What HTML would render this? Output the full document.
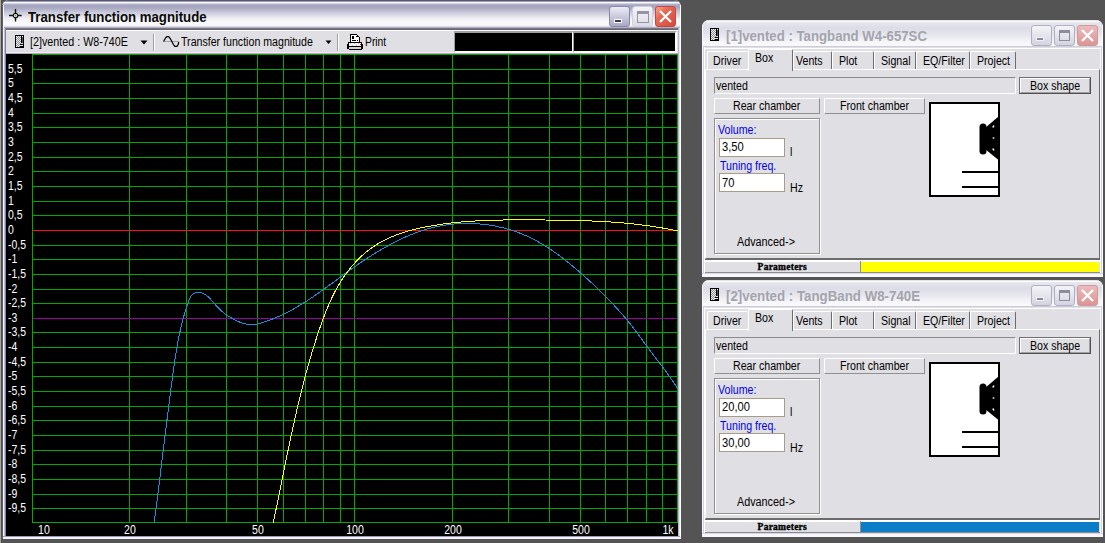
<!DOCTYPE html><html><head><meta charset="utf-8"><style>
*{margin:0;padding:0;box-sizing:border-box}
html,body{width:1105px;height:543px;overflow:hidden;background:#545454;font-family:"Liberation Sans", sans-serif}
.a{position:absolute}
.t{position:absolute;white-space:pre;line-height:1;color:#000}
</style></head><body>
<div class="a" style="left:2px;top:0;width:679px;height:539px;background:#e0dfe3;border-radius:7px 7px 0 0;overflow:hidden">
<div class="a" style="left:0;top:0;width:679px;height:31px;background:linear-gradient(to bottom,#565872 0px,#565872 1px,#9a9ab0 1px,#9a9ab0 2px,#fbfbfd 2px,#fbfbfd 3px,#d4d4e2 3px,#d4d4e2 4px,#b0b0c8 4px,#b0b0c8 5px,#a8a8c2 5px,#a8a8c2 6px,#a4a4bf 6px,#a4a4bf 7px,#a8a8c2 7px,#a8a8c2 8px,#acacc6 8px,#acacc6 9px,#b4b4cb 9px,#b4b4cb 10px,#bcbcd0 10px,#bcbcd0 11px,#c4c4d6 11px,#c4c4d6 12px,#cacada 12px,#cacada 13px,#d0d0de 13px,#d0d0de 14px,#d6d6e2 14px,#d6d6e2 15px,#dcdce6 15px,#dcdce6 16px,#e2e2eb 16px,#e2e2eb 17px,#e8e8ef 17px,#e8e8ef 18px,#eeeef3 18px,#eeeef3 19px,#f2f2f6 19px,#f2f2f6 20px,#f5f5f8 20px,#f5f5f8 21px,#f8f8fa 21px,#f8f8fa 22px,#f8f8fb 22px,#f8f8fb 23px,#f8f8fb 23px,#f8f8fb 24px,#f8f8fb 24px,#f8f8fb 25px,#f4f4f8 25px,#f4f4f8 26px,#dcdce4 26px,#dcdce4 27px,#b0b0c0 27px,#b0b0c0 28px,#787888 28px,#787888 29px,#646474 29px,#646474 30px,#ffffff 30px,#ffffff 31px)"></div>
</div>
<div class="a" style="left:0;top:0;width:1px;height:543px;background:#a6a8a0"></div>
<div class="a" style="left:1px;top:0;width:1px;height:543px;background:#4e4e4a"></div>
<div class="a" style="left:2px;top:5px;width:1px;height:534px;background:#5e5e6e"></div>
<div class="a" style="left:3px;top:5px;width:1px;height:534px;background:#f4f6ff"></div>
<div class="a" style="left:4px;top:28px;width:1px;height:510px;background:#c0c0d8"></div>
<div class="a" style="left:5px;top:28px;width:1px;height:509px;background:#8080a8"></div>
<div class="a" style="left:678px;top:28px;width:1px;height:510px;background:#b8b8d4"></div>
<div class="a" style="left:679px;top:28px;width:1px;height:510px;background:#e4e4f0"></div>
<div class="a" style="left:680px;top:5px;width:1px;height:534px;background:#ffffff"></div>
<div class="a" style="left:3px;top:536px;width:677px;height:1px;background:#9898c0"></div>
<div class="a" style="left:3px;top:537px;width:678px;height:2px;background:#f4f4fc"></div>
<svg class="a" style="left:8px;top:8px" width="16" height="16" viewBox="0 0 16 16">
<path d="M7.5 1V13.6M1 7.5H13.6" stroke="#101010" stroke-width="1.4"/>
<circle cx="7.5" cy="7.5" r="2.2" fill="none" stroke="#101010" stroke-width="1.3"/>
<circle cx="7.5" cy="7.5" r="1.6" fill="#f0f0f0"/><circle cx="7.5" cy="7.5" r="0.7" fill="#70a020"/></svg>
<div class="t" style="left:28.30px;top:10.15px;font-size:14px;font-weight:bold;color:#0a0a0a;transform:scaleX(0.945);transform-origin:0 0;">Transfer function magnitude</div>
<div class="a" style="left:609px;top:6px;width:21px;height:21px;border-radius:3px;border:1px solid #8888a8;background:linear-gradient(to bottom,#ececf6 0%,#cacade 50%,#a8a8c8 100%)"></div>
<svg class="a" style="left:609px;top:6px" width="21" height="21"><rect x="5.5" y="13.5" width="7" height="3" fill="#383858" stroke="#fff" stroke-width="1"/></svg>
<div class="a" style="left:632px;top:6px;width:21px;height:21px;border-radius:3px;border:1px solid #d0d0dc;background:linear-gradient(to bottom,#f4f4f8,#dcdce6)"></div>
<svg class="a" style="left:632px;top:6px" width="21" height="21"><rect x="5.5" y="5.5" width="11" height="11" fill="none" stroke="#9494a4" stroke-width="1"/><rect x="5.5" y="5.5" width="11" height="2.5" fill="#9494a4"/></svg>
<div class="a" style="left:655px;top:6px;width:21px;height:21px;border-radius:3px;border:1px solid #c04848;background:linear-gradient(135deg,#f4a890 0%,#e46a52 35%,#d8483c 100%)"></div>
<svg class="a" style="left:655px;top:6px" width="21" height="21"><path d="M5 5L16 16M16 5L5 16" stroke="#fff" stroke-width="2.3"/></svg>
<div class="a" style="left:6px;top:31px;width:672px;height:20px;background:#e0dfe3"></div>
<div class="a" style="left:6px;top:51px;width:672px;height:1px;background:#dcdce8"></div>
<div class="a" style="left:6px;top:52px;width:672px;height:1px;background:#f0f0f6"></div>
<div class="a" style="left:6px;top:53px;width:672px;height:1px;background:#b8aab4"></div>
<svg class="a" style="left:15px;top:35px" width="9" height="13" viewBox="0 0 9 13" shape-rendering="crispEdges"><rect x="0" y="0" width="9" height="13" fill="#000"/><rect x="1" y="1" width="1" height="1" fill="#f0f0f0"/><rect x="2" y="1" width="1" height="1" fill="#8c8c8c"/><rect x="3" y="1" width="1" height="1" fill="#f0f0f0"/><rect x="4" y="1" width="1" height="1" fill="#8c8c8c"/><rect x="5" y="1" width="1" height="1" fill="#f0f0f0"/><rect x="1" y="2" width="1" height="1" fill="#8c8c8c"/><rect x="2" y="2" width="1" height="1" fill="#f0f0f0"/><rect x="3" y="2" width="1" height="1" fill="#8c8c8c"/><rect x="4" y="2" width="1" height="1" fill="#f0f0f0"/><rect x="5" y="2" width="1" height="1" fill="#8c8c8c"/><rect x="1" y="3" width="1" height="1" fill="#f0f0f0"/><rect x="2" y="3" width="1" height="1" fill="#8c8c8c"/><rect x="3" y="3" width="1" height="1" fill="#f0f0f0"/><rect x="4" y="3" width="1" height="1" fill="#8c8c8c"/><rect x="5" y="3" width="1" height="1" fill="#f0f0f0"/><rect x="1" y="4" width="1" height="1" fill="#8c8c8c"/><rect x="2" y="4" width="1" height="1" fill="#f0f0f0"/><rect x="3" y="4" width="1" height="1" fill="#8c8c8c"/><rect x="4" y="4" width="1" height="1" fill="#f0f0f0"/><rect x="5" y="4" width="1" height="1" fill="#8c8c8c"/><rect x="1" y="5" width="1" height="1" fill="#f0f0f0"/><rect x="2" y="5" width="1" height="1" fill="#8c8c8c"/><rect x="3" y="5" width="1" height="1" fill="#f0f0f0"/><rect x="4" y="5" width="1" height="1" fill="#8c8c8c"/><rect x="5" y="5" width="1" height="1" fill="#f0f0f0"/><rect x="1" y="6" width="1" height="1" fill="#8c8c8c"/><rect x="2" y="6" width="1" height="1" fill="#f0f0f0"/><rect x="3" y="6" width="1" height="1" fill="#8c8c8c"/><rect x="4" y="6" width="1" height="1" fill="#f0f0f0"/><rect x="5" y="6" width="1" height="1" fill="#8c8c8c"/><rect x="1" y="7" width="1" height="1" fill="#f0f0f0"/><rect x="2" y="7" width="1" height="1" fill="#8c8c8c"/><rect x="3" y="7" width="1" height="1" fill="#f0f0f0"/><rect x="4" y="7" width="1" height="1" fill="#8c8c8c"/><rect x="5" y="7" width="1" height="1" fill="#f0f0f0"/><rect x="1" y="8" width="1" height="1" fill="#8c8c8c"/><rect x="2" y="8" width="1" height="1" fill="#f0f0f0"/><rect x="3" y="8" width="1" height="1" fill="#8c8c8c"/><rect x="4" y="8" width="1" height="1" fill="#f0f0f0"/><rect x="5" y="8" width="1" height="1" fill="#8c8c8c"/><rect x="1" y="9" width="1" height="1" fill="#f0f0f0"/><rect x="2" y="9" width="1" height="1" fill="#8c8c8c"/><rect x="3" y="9" width="1" height="1" fill="#f0f0f0"/><rect x="4" y="9" width="1" height="1" fill="#8c8c8c"/><rect x="1" y="10" width="1" height="1" fill="#8c8c8c"/><rect x="2" y="10" width="1" height="1" fill="#f0f0f0"/><rect x="3" y="10" width="1" height="1" fill="#8c8c8c"/><rect x="4" y="10" width="1" height="1" fill="#f0f0f0"/><rect x="1" y="11" width="1" height="1" fill="#f0f0f0"/><rect x="2" y="11" width="1" height="1" fill="#8c8c8c"/><rect x="3" y="11" width="1" height="1" fill="#f0f0f0"/><rect x="4" y="11" width="1" height="1" fill="#8c8c8c"/><rect x="7" y="1" width="1" height="1" fill="#f0f0f0"/><rect x="7" y="2" width="1" height="6" fill="#505050"/><rect x="6" y="8" width="2" height="1" fill="#e8e8e8"/><rect x="5" y="10" width="3" height="1" fill="#e8e8e8"/></svg>
<div class="t" style="left:30.30px;top:35.84px;font-size:12px;color:#000;transform:scaleX(0.895);transform-origin:0 0;">[2]vented : W8-740E</div>
<svg class="a" style="left:140px;top:40px" width="8" height="5"><path d="M0.5 0.5H7.5L4 4.5Z" fill="#000"/></svg>
<div class="a" style="left:153px;top:34px;width:1px;height:17px;background:#a0a0a4"></div>
<div class="a" style="left:154px;top:34px;width:1px;height:17px;background:#ffffff"></div>
<svg class="a" style="left:158px;top:32px" width="26" height="18"><path d="M6,9.5H21" stroke="#a0a0a8" stroke-width="1"/><path d="M5.5,9.5 L7.5,6.0 L8.8,4.5 L10.7,4.5 L12.2,6.5 L13.6,9.0 L15.4,12.5 L16.8,14.4 L19.0,14.4 L20.3,12.2 L20.7,10.0" fill="none" stroke="#000" stroke-width="1.25"/></svg>
<div class="t" style="left:181.40px;top:35.84px;font-size:12px;color:#000;transform:scaleX(0.885);transform-origin:0 0;">Transfer function magnitude</div>
<svg class="a" style="left:325px;top:40px" width="8" height="5"><path d="M0.5 0.5H6.5L3.5 4Z" fill="#000"/></svg>
<div class="a" style="left:337px;top:34px;width:1px;height:17px;background:#a0a0a4"></div>
<div class="a" style="left:338px;top:34px;width:1px;height:17px;background:#ffffff"></div>
<svg class="a" style="left:344px;top:31px" width="22" height="21" viewBox="0 0 22 21" shape-rendering="crispEdges">
<path d="M6.5 11.5V3.5H12.5L15.5 6.5V11.5" fill="#fff" stroke="#000"/>
<rect x="8" y="5" width="2" height="2" fill="#000"/><rect x="8" y="7" width="2" height="1" fill="#000"/>
<rect x="8" y="9" width="4" height="1" fill="#000"/><rect x="13" y="9" width="1" height="1" fill="#000"/><rect x="12" y="5" width="2" height="1" fill="#000"/>
<path d="M4.5 11.5H17.5V17.5H4.5Z" fill="#fff" stroke="#000"/>
<path d="M3.5 12.5V17.5M18.5 12.5V17.5M4.5 18.5H17.5" stroke="#000"/>
<rect x="5" y="12" width="12" height="3" fill="#f4f4f4"/>
<rect x="6" y="12" width="1" height="1" fill="#bbb"/><rect x="8" y="14" width="1" height="1" fill="#bbb"/><rect x="10" y="12" width="1" height="1" fill="#bbb"/><rect x="12" y="14" width="1" height="1" fill="#bbb"/><rect x="14" y="12" width="1" height="1" fill="#bbb"/>
<rect x="16" y="13" width="1" height="1" fill="#e01030"/>
<rect x="4" y="15" width="14" height="1" fill="#000"/>
<rect x="5" y="16" width="12" height="2" fill="#d4d4d4"/>
</svg>
<div class="t" style="left:364.90px;top:35.84px;font-size:12px;color:#000;transform:scaleX(0.86);transform-origin:0 0;">Print</div>
<div class="a" style="left:454px;top:31px;width:119px;height:22px;border-top:2px solid #a0a0a0;border-left:1px solid #a0a0a0;border-right:1px solid #fff;border-bottom:2px solid #fff;background:#000"></div>
<div class="a" style="left:573px;top:31px;width:104px;height:22px;border-top:2px solid #a0a0a0;border-left:1px solid #a0a0a0;border-right:2px solid #fff;border-bottom:2px solid #fff;background:#000"></div>
<svg class="a" style="left:0;top:0" width="1105" height="543" shape-rendering="crispEdges">
<rect x="6" y="54" width="672" height="482" fill="#000"/>
<rect x="32" y="54" width="646" height="1" fill="#00a800"/>
<rect x="32" y="69" width="646" height="1" fill="#00a800"/>
<rect x="32" y="83" width="646" height="1" fill="#00a800"/>
<rect x="32" y="98" width="646" height="1" fill="#00a800"/>
<rect x="32" y="113" width="646" height="1" fill="#00a800"/>
<rect x="32" y="127" width="646" height="1" fill="#00a800"/>
<rect x="32" y="142" width="646" height="1" fill="#00a800"/>
<rect x="32" y="157" width="646" height="1" fill="#00a800"/>
<rect x="32" y="171" width="646" height="1" fill="#00a800"/>
<rect x="32" y="186" width="646" height="1" fill="#00a800"/>
<rect x="32" y="201" width="646" height="1" fill="#00a800"/>
<rect x="32" y="215" width="646" height="1" fill="#00a800"/>
<rect x="32" y="230" width="646" height="1" fill="#00a800"/>
<rect x="32" y="245" width="646" height="1" fill="#00a800"/>
<rect x="32" y="259" width="646" height="1" fill="#00a800"/>
<rect x="32" y="274" width="646" height="1" fill="#00a800"/>
<rect x="32" y="289" width="646" height="1" fill="#00a800"/>
<rect x="32" y="303" width="646" height="1" fill="#00a800"/>
<rect x="32" y="318" width="646" height="1" fill="#00a800"/>
<rect x="32" y="332" width="646" height="1" fill="#00a800"/>
<rect x="32" y="347" width="646" height="1" fill="#00a800"/>
<rect x="32" y="362" width="646" height="1" fill="#00a800"/>
<rect x="32" y="376" width="646" height="1" fill="#00a800"/>
<rect x="32" y="391" width="646" height="1" fill="#00a800"/>
<rect x="32" y="406" width="646" height="1" fill="#00a800"/>
<rect x="32" y="420" width="646" height="1" fill="#00a800"/>
<rect x="32" y="435" width="646" height="1" fill="#00a800"/>
<rect x="32" y="450" width="646" height="1" fill="#00a800"/>
<rect x="32" y="464" width="646" height="1" fill="#00a800"/>
<rect x="32" y="479" width="646" height="1" fill="#00a800"/>
<rect x="32" y="494" width="646" height="1" fill="#00a800"/>
<rect x="32" y="508" width="646" height="1" fill="#00a800"/>
<rect x="32" y="522" width="646" height="1" fill="#00a800"/>
<rect x="32" y="54" width="1" height="469" fill="#00a800"/>
<rect x="129" y="54" width="1" height="469" fill="#00a800"/>
<rect x="186" y="54" width="1" height="469" fill="#00a800"/>
<rect x="226" y="54" width="1" height="469" fill="#00a800"/>
<rect x="257" y="54" width="1" height="469" fill="#00a800"/>
<rect x="283" y="54" width="1" height="469" fill="#00a800"/>
<rect x="305" y="54" width="1" height="469" fill="#00a800"/>
<rect x="323" y="54" width="1" height="469" fill="#00a800"/>
<rect x="340" y="54" width="1" height="469" fill="#00a800"/>
<rect x="354" y="54" width="1" height="469" fill="#00a800"/>
<rect x="452" y="54" width="1" height="469" fill="#00a800"/>
<rect x="508" y="54" width="1" height="469" fill="#00a800"/>
<rect x="549" y="54" width="1" height="469" fill="#00a800"/>
<rect x="580" y="54" width="1" height="469" fill="#00a800"/>
<rect x="605" y="54" width="1" height="469" fill="#00a800"/>
<rect x="627" y="54" width="1" height="469" fill="#00a800"/>
<rect x="646" y="54" width="1" height="469" fill="#00a800"/>
<rect x="662" y="54" width="1" height="469" fill="#00a800"/>
<rect x="677" y="54" width="1" height="469" fill="#00a800"/>
<rect x="33" y="230" width="644" height="1" fill="#ff1010"/>
<rect x="33" y="318" width="644" height="1" fill="#a000a8"/>
</svg>
<svg class="a" style="left:0;top:0" width="1105" height="543"><defs><clipPath id="cp"><rect x="32" y="54" width="646" height="469"/></clipPath></defs><g clip-path="url(#cp)" fill="none" stroke-width="1" shape-rendering="crispEdges">
<path d="M154.15,522.99 L154.37,521.36 L154.58,519.72 L154.79,518.09 L155.00,516.45 L155.21,514.81 L155.42,513.18 L155.63,511.54 L155.84,509.90 L156.05,508.26 L156.26,506.63 L156.46,504.99 L156.67,503.35 L156.88,501.71 L157.08,500.07 L157.29,498.43 L157.50,496.79 L157.70,495.15 L157.91,493.51 L158.11,491.87 L158.31,490.23 L158.52,488.59 L158.72,486.95 L158.92,485.31 L159.13,483.67 L159.33,482.02 L159.53,480.38 L159.73,478.74 L159.94,477.10 L160.14,475.45 L160.34,473.81 L160.54,472.17 L160.74,470.53 L160.95,468.88 L161.15,467.24 L161.35,465.60 L161.55,463.95 L161.75,462.31 L161.95,460.67 L162.15,459.02 L162.35,457.38 L162.55,455.74 L162.76,454.09 L162.96,452.45 L163.16,450.81 L163.36,449.16 L163.56,447.52 L163.76,445.88 L163.96,444.23 L164.17,442.59 L164.37,440.94 L164.57,439.30 L164.77,437.66 L164.97,436.01 L165.18,434.37 L165.38,432.73 L165.58,431.08 L165.79,429.44 L165.99,427.80 L166.19,426.16 L166.40,424.51 L166.60,422.87 L166.81,421.23 L167.01,419.59 L167.22,417.94 L167.43,416.30 L167.63,414.66 L167.84,413.02 L168.05,411.38 L168.25,409.74 L168.46,408.09 L168.67,406.45 L168.88,404.81 L169.09,403.17 L169.30,401.53 L169.51,399.89 L169.72,398.25 L169.93,396.61 L170.15,394.97 L170.36,393.34 L170.57,391.70 L170.79,390.06 L171.00,388.42 L171.22,386.78 L171.43,385.15 L171.65,383.51 L171.87,381.87 L172.09,380.24 L172.31,378.60 L172.53,376.96 L172.75,375.33 L172.97,373.69 L173.19,372.06 L173.42,370.43 L173.64,368.79 L173.87,367.16 L174.10,365.53 L174.34,363.90 L174.57,362.26 L174.81,360.63 L175.06,359.00 L175.30,357.37 L175.56,355.74 L175.81,354.11 L176.07,352.48 L176.34,350.86 L176.61,349.23 L176.89,347.60 L177.17,345.98 L177.46,344.35 L177.76,342.72 L178.06,341.10 L178.37,339.48 L178.69,337.85 L179.01,336.23 L179.35,334.61 L179.69,332.99 L180.04,331.37 L180.40,329.75 L180.77,328.13 L181.15,326.51 L181.54,324.89 L181.93,323.27 L182.34,321.66 L182.76,320.04 L183.19,318.43 L183.63,316.81 L184.09,315.20 L184.55,313.59 L185.03,311.97 L185.52,310.36 L186.02,308.75 L186.54,307.14 L187.07,305.54 L187.61,303.93 L188.17,302.32 L188.76,300.74 L189.39,299.21 L190.10,297.77 L190.90,296.43 L191.81,295.25 L192.86,294.24 L194.06,293.43 L195.43,292.86 L196.96,292.54 L198.57,292.45 L200.21,292.60 L201.82,292.98 L203.37,293.57 L204.84,294.35 L206.25,295.29 L207.60,296.36 L208.90,297.54 L210.15,298.79 L211.36,300.08 L212.53,301.40 L213.67,302.71 L214.79,303.99 L215.89,305.23 L216.98,306.44 L218.09,307.62 L219.21,308.77 L220.37,309.88 L221.56,310.96 L222.79,312.01 L224.04,313.03 L225.34,314.02 L226.66,314.98 L228.01,315.90 L229.40,316.79 L230.81,317.66 L232.25,318.49 L233.72,319.30 L235.21,320.07 L236.72,320.80 L238.26,321.49 L239.81,322.12 L241.39,322.70 L242.97,323.21 L244.58,323.64 L246.19,324.01 L247.81,324.28 L249.44,324.47 L251.08,324.55 L252.72,324.54 L254.36,324.41 L256.00,324.19 L257.64,323.88 L259.27,323.50 L260.90,323.07 L262.52,322.58 L264.13,322.07 L265.74,321.53 L267.33,320.98 L268.90,320.41 L270.47,319.83 L272.03,319.23 L273.58,318.61 L275.11,317.98 L276.64,317.33 L278.16,316.67 L279.67,316.00 L281.17,315.31 L282.66,314.61 L284.14,313.89 L285.61,313.16 L287.08,312.42 L288.53,311.67 L289.98,310.90 L291.43,310.12 L292.86,309.33 L294.29,308.53 L295.71,307.72 L297.12,306.90 L298.53,306.07 L299.93,305.23 L301.33,304.38 L302.72,303.52 L304.11,302.65 L305.49,301.78 L306.86,300.89 L308.24,300.00 L309.60,299.10 L310.97,298.19 L312.33,297.28 L313.68,296.36 L315.03,295.43 L316.38,294.50 L317.73,293.56 L319.07,292.62 L320.41,291.67 L321.75,290.72 L323.09,289.77 L324.42,288.81 L325.76,287.84 L327.09,286.87 L328.42,285.90 L329.75,284.93 L331.08,283.96 L332.41,282.98 L333.74,282.00 L335.07,281.02 L336.40,280.04 L337.74,279.06 L339.07,278.08 L340.40,277.09 L341.74,276.11 L343.07,275.13 L344.41,274.15 L345.75,273.17 L347.10,272.20 L348.44,271.22 L349.79,270.25 L351.14,269.28 L352.50,268.31 L353.86,267.35 L355.22,266.39 L356.58,265.43 L357.96,264.48 L359.33,263.53 L360.71,262.58 L362.09,261.64 L363.48,260.71 L364.87,259.78 L366.26,258.86 L367.66,257.94 L369.06,257.03 L370.47,256.13 L371.88,255.23 L373.29,254.34 L374.71,253.46 L376.13,252.58 L377.56,251.71 L378.99,250.85 L380.43,250.00 L381.87,249.16 L383.31,248.33 L384.76,247.50 L386.21,246.69 L387.67,245.88 L389.13,245.08 L390.59,244.30 L392.06,243.52 L393.53,242.75 L395.01,242.00 L396.49,241.26 L397.97,240.53 L399.46,239.80 L400.96,239.10 L402.46,238.40 L403.96,237.72 L405.47,237.05 L406.98,236.39 L408.49,235.74 L410.01,235.11 L411.54,234.49 L413.06,233.89 L414.60,233.30 L416.13,232.73 L417.68,232.17 L419.22,231.62 L420.77,231.09 L422.33,230.58 L423.89,230.08 L425.45,229.60 L427.02,229.13 L428.59,228.69 L430.17,228.25 L431.75,227.84 L433.34,227.44 L434.93,227.06 L436.52,226.70 L438.12,226.36 L439.73,226.03 L441.34,225.72 L442.95,225.44 L444.57,225.17 L446.19,224.92 L447.82,224.69 L449.45,224.48 L451.08,224.29 L452.72,224.11 L454.36,223.96 L456.00,223.83 L457.64,223.71 L459.29,223.61 L460.94,223.53 L462.59,223.48 L464.24,223.44 L465.90,223.41 L467.55,223.41 L469.21,223.43 L470.86,223.46 L472.52,223.51 L474.18,223.59 L475.83,223.68 L477.49,223.79 L479.14,223.91 L480.80,224.06 L482.45,224.23 L484.10,224.41 L485.75,224.61 L487.39,224.83 L489.04,225.07 L490.68,225.32 L492.32,225.60 L493.95,225.89 L495.59,226.20 L497.22,226.53 L498.84,226.88 L500.46,227.25 L502.08,227.63 L503.69,228.03 L505.30,228.45 L506.90,228.89 L508.50,229.35 L510.09,229.82 L511.67,230.31 L513.25,230.82 L514.82,231.35 L516.39,231.89 L517.95,232.46 L519.50,233.04 L521.04,233.64 L522.58,234.25 L524.11,234.89 L525.63,235.54 L527.14,236.21 L528.65,236.89 L530.14,237.60 L531.63,238.32 L533.10,239.06 L534.57,239.81 L536.03,240.59 L537.48,241.37 L538.92,242.18 L540.35,243.00 L541.77,243.83 L543.18,244.68 L544.59,245.54 L545.99,246.42 L547.38,247.31 L548.76,248.21 L550.14,249.13 L551.51,250.05 L552.87,250.99 L554.22,251.94 L555.57,252.90 L556.91,253.87 L558.25,254.85 L559.58,255.83 L560.90,256.83 L562.22,257.83 L563.53,258.85 L564.83,259.87 L566.13,260.90 L567.43,261.93 L568.72,262.97 L570.00,264.02 L571.28,265.07 L572.56,266.12 L573.83,267.18 L575.10,268.25 L576.36,269.32 L577.62,270.39 L578.87,271.47 L580.12,272.55 L581.37,273.63 L582.61,274.73 L583.85,275.82 L585.08,276.92 L586.31,278.02 L587.53,279.13 L588.75,280.24 L589.97,281.36 L591.18,282.48 L592.39,283.60 L593.59,284.73 L594.79,285.87 L595.99,287.01 L597.18,288.15 L598.36,289.30 L599.54,290.45 L600.72,291.60 L601.90,292.76 L603.06,293.93 L604.23,295.10 L605.39,296.27 L606.54,297.45 L607.70,298.64 L608.84,299.82 L609.99,301.02 L611.13,302.21 L612.26,303.41 L613.39,304.62 L614.52,305.83 L615.64,307.05 L616.76,308.27 L617.87,309.49 L618.97,310.72 L620.08,311.95 L621.17,313.19 L622.26,314.44 L623.34,315.69 L624.42,316.95 L625.49,318.21 L626.56,319.47 L627.61,320.74 L628.66,322.02 L629.71,323.30 L630.74,324.59 L631.77,325.89 L632.79,327.19 L633.80,328.50 L634.80,329.81 L635.80,331.13 L636.78,332.45 L637.77,333.78 L638.74,335.11 L639.72,336.45 L640.68,337.78 L641.65,339.12 L642.62,340.46 L643.59,341.80 L644.56,343.13 L645.53,344.47 L646.51,345.80 L647.49,347.13 L648.47,348.46 L649.46,349.78 L650.46,351.10 L651.45,352.42 L652.45,353.74 L653.46,355.05 L654.46,356.37 L655.46,357.68 L656.47,359.00 L657.47,360.31 L658.47,361.63 L659.47,362.94 L660.48,364.26 L661.47,365.58 L662.47,366.90 L663.46,368.22 L664.45,369.55 L665.43,370.88 L666.41,372.21 L667.38,373.55 L668.35,374.89 L669.31,376.24 L670.26,377.59 L671.21,378.95 L672.15,380.31 L673.08,381.68 L673.99,383.06 L674.90,384.44 L675.80,385.83 L676.69,387.23 L677.57,388.63 L678.43,390.05" stroke="#1890e0"/>
<path d="M273.19,523.08 L273.44,521.88 L273.70,520.67 L273.95,519.46 L274.20,518.26 L274.45,517.05 L274.70,515.85 L274.96,514.64 L275.20,513.44 L275.45,512.23 L275.70,511.03 L275.95,509.82 L276.20,508.62 L276.45,507.42 L276.69,506.21 L276.94,505.01 L277.18,503.80 L277.43,502.60 L277.68,501.40 L277.92,500.19 L278.17,498.99 L278.41,497.79 L278.65,496.59 L278.90,495.38 L279.14,494.18 L279.38,492.98 L279.63,491.78 L279.87,490.58 L280.11,489.37 L280.36,488.17 L280.60,486.97 L280.84,485.77 L281.08,484.57 L281.33,483.37 L281.57,482.17 L281.81,480.97 L282.05,479.77 L282.29,478.57 L282.54,477.37 L282.78,476.17 L283.02,474.97 L283.26,473.77 L283.51,472.57 L283.75,471.37 L283.99,470.18 L284.23,468.98 L284.48,467.78 L284.72,466.58 L284.96,465.38 L285.21,464.19 L285.45,462.99 L285.70,461.79 L285.94,460.59 L286.19,459.40 L286.43,458.20 L286.68,457.01 L286.92,455.81 L287.17,454.61 L287.42,453.42 L287.66,452.22 L287.91,451.03 L288.16,449.83 L288.41,448.64 L288.66,447.44 L288.91,446.25 L289.16,445.05 L289.41,443.86 L289.66,442.67 L289.91,441.47 L290.16,440.28 L290.42,439.09 L290.67,437.89 L290.93,436.70 L291.18,435.51 L291.44,434.32 L291.69,433.13 L291.95,431.93 L292.21,430.74 L292.47,429.55 L292.73,428.36 L292.99,427.17 L293.25,425.98 L293.51,424.79 L293.78,423.60 L294.04,422.41 L294.30,421.22 L294.57,420.03 L294.84,418.84 L295.11,417.65 L295.37,416.46 L295.64,415.28 L295.92,414.09 L296.19,412.90 L296.46,411.71 L296.74,410.53 L297.01,409.34 L297.29,408.15 L297.56,406.97 L297.84,405.78 L298.12,404.59 L298.40,403.41 L298.69,402.22 L298.97,401.04 L299.26,399.85 L299.54,398.67 L299.83,397.48 L300.12,396.30 L300.41,395.11 L300.70,393.93 L300.99,392.75 L301.29,391.56 L301.58,390.38 L301.88,389.20 L302.18,388.02 L302.48,386.84 L302.78,385.65 L303.08,384.47 L303.39,383.29 L303.70,382.11 L304.00,380.93 L304.31,379.75 L304.62,378.57 L304.94,377.39 L305.25,376.21 L305.57,375.03 L305.88,373.85 L306.20,372.67 L306.52,371.50 L306.85,370.32 L307.17,369.14 L307.50,367.96 L307.83,366.79 L308.16,365.61 L308.49,364.43 L308.82,363.26 L309.16,362.08 L309.50,360.90 L309.83,359.73 L310.18,358.55 L310.52,357.38 L310.86,356.20 L311.21,355.03 L311.56,353.86 L311.91,352.68 L312.27,351.51 L312.62,350.34 L312.98,349.16 L313.34,347.99 L313.70,346.82 L314.06,345.65 L314.43,344.48 L314.80,343.31 L315.17,342.14 L315.54,340.97 L315.92,339.80 L316.29,338.63 L316.67,337.46 L317.05,336.29 L317.44,335.12 L317.82,333.95 L318.21,332.78 L318.60,331.61 L319.00,330.45 L319.39,329.28 L319.79,328.11 L320.20,326.95 L320.60,325.78 L321.01,324.62 L321.42,323.46 L321.84,322.30 L322.25,321.14 L322.68,319.98 L323.10,318.82 L323.53,317.67 L323.97,316.51 L324.41,315.36 L324.85,314.21 L325.30,313.06 L325.75,311.92 L326.21,310.78 L326.67,309.64 L327.14,308.50 L327.61,307.36 L328.09,306.23 L328.58,305.10 L329.07,303.97 L329.57,302.85 L330.07,301.73 L330.58,300.61 L331.09,299.50 L331.61,298.39 L332.14,297.29 L332.68,296.18 L333.22,295.09 L333.77,293.99 L334.33,292.90 L334.89,291.82 L335.46,290.73 L336.04,289.66 L336.63,288.59 L337.22,287.52 L337.82,286.46 L338.43,285.40 L339.05,284.35 L339.68,283.30 L340.32,282.26 L340.96,281.22 L341.62,280.19 L342.28,279.16 L342.96,278.14 L343.64,277.13 L344.33,276.12 L345.03,275.12 L345.74,274.13 L346.46,273.14 L347.18,272.16 L347.92,271.18 L348.67,270.22 L349.42,269.26 L350.18,268.31 L350.96,267.36 L351.74,266.43 L352.53,265.50 L353.33,264.58 L354.13,263.67 L354.95,262.77 L355.78,261.88 L356.61,261.00 L357.45,260.12 L358.30,259.26 L359.16,258.40 L360.03,257.56 L360.91,256.73 L361.80,255.90 L362.69,255.09 L363.59,254.29 L364.51,253.49 L365.43,252.71 L366.35,251.94 L367.29,251.19 L368.24,250.44 L369.19,249.71 L370.15,248.98 L371.13,248.27 L372.11,247.58 L373.09,246.89 L374.09,246.22 L375.09,245.56 L376.11,244.91 L377.13,244.28 L378.15,243.66 L379.19,243.05 L380.23,242.45 L381.28,241.87 L382.34,241.30 L383.41,240.74 L384.48,240.19 L385.56,239.65 L386.64,239.12 L387.73,238.61 L388.83,238.10 L389.93,237.61 L391.04,237.13 L392.16,236.65 L393.28,236.19 L394.41,235.74 L395.54,235.30 L396.67,234.86 L397.82,234.44 L398.96,234.03 L400.11,233.62 L401.27,233.23 L402.43,232.84 L403.59,232.47 L404.76,232.10 L405.93,231.74 L407.11,231.39 L408.29,231.05 L409.47,230.71 L410.66,230.38 L411.85,230.07 L413.04,229.75 L414.24,229.45 L415.43,229.15 L416.63,228.87 L417.84,228.58 L419.04,228.31 L420.25,228.04 L421.46,227.78 L422.67,227.52 L423.88,227.27 L425.09,227.03 L426.31,226.79 L427.52,226.56 L428.74,226.33 L429.95,226.11 L431.17,225.90 L432.39,225.69 L433.61,225.48 L434.83,225.28 L436.05,225.09 L437.26,224.90 L438.48,224.71 L439.70,224.53 L440.92,224.35 L442.14,224.18 L443.36,224.01 L444.58,223.84 L445.80,223.68 L447.01,223.53 L448.23,223.38 L449.45,223.23 L450.67,223.09 L451.89,222.95 L453.11,222.81 L454.33,222.68 L455.55,222.55 L456.77,222.43 L457.99,222.31 L459.21,222.19 L460.43,222.08 L461.65,221.97 L462.86,221.86 L464.08,221.76 L465.30,221.66 L466.52,221.57 L467.74,221.47 L468.96,221.38 L470.18,221.30 L471.40,221.22 L472.62,221.14 L473.84,221.06 L475.06,220.99 L476.28,220.92 L477.50,220.85 L478.72,220.78 L479.94,220.72 L481.16,220.66 L482.38,220.61 L483.61,220.55 L484.83,220.50 L486.05,220.45 L487.27,220.41 L488.49,220.36 L489.71,220.32 L490.93,220.28 L492.15,220.24 L493.37,220.21 L494.59,220.18 L495.81,220.14 L497.03,220.12 L498.25,220.09 L499.47,220.06 L500.70,220.04 L501.92,220.02 L503.14,220.00 L504.36,219.98 L505.58,219.97 L506.80,219.95 L508.02,219.94 L509.25,219.93 L510.47,219.92 L511.69,219.91 L512.91,219.90 L514.13,219.89 L515.35,219.89 L516.57,219.89 L517.80,219.88 L519.02,219.88 L520.24,219.88 L521.46,219.88 L522.68,219.88 L523.91,219.88 L525.13,219.89 L526.35,219.89 L527.57,219.90 L528.80,219.90 L530.02,219.91 L531.24,219.91 L532.46,219.92 L533.68,219.92 L534.91,219.93 L536.13,219.94 L537.35,219.95 L538.58,219.95 L539.80,219.96 L541.02,219.97 L542.24,219.98 L543.47,219.99 L544.69,220.00 L545.91,220.01 L547.13,220.02 L548.36,220.03 L549.58,220.04 L550.80,220.05 L552.03,220.06 L553.25,220.08 L554.47,220.09 L555.70,220.10 L556.92,220.12 L558.14,220.14 L559.36,220.15 L560.59,220.17 L561.81,220.19 L563.03,220.21 L564.26,220.23 L565.48,220.25 L566.70,220.27 L567.92,220.29 L569.15,220.31 L570.37,220.34 L571.59,220.37 L572.82,220.39 L574.04,220.42 L575.26,220.45 L576.48,220.48 L577.70,220.51 L578.93,220.55 L580.15,220.58 L581.37,220.62 L582.59,220.66 L583.82,220.69 L585.04,220.74 L586.26,220.78 L587.48,220.82 L588.70,220.87 L589.92,220.91 L591.14,220.96 L592.37,221.01 L593.59,221.07 L594.81,221.12 L596.03,221.18 L597.25,221.23 L598.47,221.29 L599.69,221.35 L600.91,221.42 L602.13,221.48 L603.35,221.55 L604.57,221.62 L605.79,221.69 L607.01,221.77 L608.23,221.84 L609.45,221.92 L610.67,222.00 L611.88,222.08 L613.10,222.17 L614.32,222.25 L615.54,222.34 L616.76,222.44 L617.97,222.53 L619.19,222.63 L620.41,222.73 L621.63,222.83 L622.84,222.93 L624.06,223.04 L625.28,223.15 L626.49,223.26 L627.71,223.38 L628.92,223.50 L630.14,223.62 L631.36,223.74 L632.57,223.87 L633.78,224.00 L635.00,224.13 L636.21,224.27 L637.43,224.40 L638.64,224.55 L639.85,224.69 L641.07,224.84 L642.28,224.99 L643.49,225.14 L644.71,225.30 L645.92,225.46 L647.13,225.62 L648.34,225.79 L649.55,225.96 L650.76,226.14 L651.97,226.31 L653.18,226.49 L654.39,226.68 L655.60,226.87 L656.81,227.06 L658.02,227.25 L659.23,227.45 L660.44,227.65 L661.65,227.86 L662.85,228.07 L664.06,228.28 L665.27,228.50 L666.47,228.72 L667.68,228.95 L668.89,229.17 L670.09,229.41 L671.30,229.64 L672.50,229.88 L673.71,230.13 L674.91,230.38 L676.11,230.63 L677.32,230.89 L678.52,231.15" stroke="#ffff00"/>
</g></svg>
<div class="t" style="left:8.30px;top:63.24px;font-size:12px;color:#fff;transform:scaleX(0.87);transform-origin:0 0;">5,5</div>
<div class="t" style="left:8.30px;top:77.24px;font-size:12px;color:#fff;transform:scaleX(0.87);transform-origin:0 0;">5</div>
<div class="t" style="left:8.30px;top:92.24px;font-size:12px;color:#fff;transform:scaleX(0.87);transform-origin:0 0;">4,5</div>
<div class="t" style="left:8.30px;top:107.24px;font-size:12px;color:#fff;transform:scaleX(0.87);transform-origin:0 0;">4</div>
<div class="t" style="left:8.30px;top:121.24px;font-size:12px;color:#fff;transform:scaleX(0.87);transform-origin:0 0;">3,5</div>
<div class="t" style="left:8.30px;top:136.24px;font-size:12px;color:#fff;transform:scaleX(0.87);transform-origin:0 0;">3</div>
<div class="t" style="left:8.30px;top:151.24px;font-size:12px;color:#fff;transform:scaleX(0.87);transform-origin:0 0;">2,5</div>
<div class="t" style="left:8.30px;top:165.24px;font-size:12px;color:#fff;transform:scaleX(0.87);transform-origin:0 0;">2</div>
<div class="t" style="left:8.30px;top:180.24px;font-size:12px;color:#fff;transform:scaleX(0.87);transform-origin:0 0;">1,5</div>
<div class="t" style="left:8.30px;top:195.24px;font-size:12px;color:#fff;transform:scaleX(0.87);transform-origin:0 0;">1</div>
<div class="t" style="left:8.30px;top:209.24px;font-size:12px;color:#fff;transform:scaleX(0.87);transform-origin:0 0;">0,5</div>
<div class="t" style="left:8.30px;top:224.24px;font-size:12px;color:#fff;transform:scaleX(0.87);transform-origin:0 0;">0</div>
<div class="t" style="left:8.30px;top:239.24px;font-size:12px;color:#fff;transform:scaleX(0.87);transform-origin:0 0;">-0,5</div>
<div class="t" style="left:8.30px;top:253.24px;font-size:12px;color:#fff;transform:scaleX(0.87);transform-origin:0 0;">-1</div>
<div class="t" style="left:8.30px;top:268.24px;font-size:12px;color:#fff;transform:scaleX(0.87);transform-origin:0 0;">-1,5</div>
<div class="t" style="left:8.30px;top:283.24px;font-size:12px;color:#fff;transform:scaleX(0.87);transform-origin:0 0;">-2</div>
<div class="t" style="left:8.30px;top:297.24px;font-size:12px;color:#fff;transform:scaleX(0.87);transform-origin:0 0;">-2,5</div>
<div class="t" style="left:8.30px;top:312.24px;font-size:12px;color:#fff;transform:scaleX(0.87);transform-origin:0 0;">-3</div>
<div class="t" style="left:8.30px;top:326.24px;font-size:12px;color:#fff;transform:scaleX(0.87);transform-origin:0 0;">-3,5</div>
<div class="t" style="left:8.30px;top:341.24px;font-size:12px;color:#fff;transform:scaleX(0.87);transform-origin:0 0;">-4</div>
<div class="t" style="left:8.30px;top:356.24px;font-size:12px;color:#fff;transform:scaleX(0.87);transform-origin:0 0;">-4,5</div>
<div class="t" style="left:8.30px;top:370.24px;font-size:12px;color:#fff;transform:scaleX(0.87);transform-origin:0 0;">-5</div>
<div class="t" style="left:8.30px;top:385.24px;font-size:12px;color:#fff;transform:scaleX(0.87);transform-origin:0 0;">-5,5</div>
<div class="t" style="left:8.30px;top:400.24px;font-size:12px;color:#fff;transform:scaleX(0.87);transform-origin:0 0;">-6</div>
<div class="t" style="left:8.30px;top:414.24px;font-size:12px;color:#fff;transform:scaleX(0.87);transform-origin:0 0;">-6,5</div>
<div class="t" style="left:8.30px;top:429.24px;font-size:12px;color:#fff;transform:scaleX(0.87);transform-origin:0 0;">-7</div>
<div class="t" style="left:8.30px;top:444.24px;font-size:12px;color:#fff;transform:scaleX(0.87);transform-origin:0 0;">-7,5</div>
<div class="t" style="left:8.30px;top:458.24px;font-size:12px;color:#fff;transform:scaleX(0.87);transform-origin:0 0;">-8</div>
<div class="t" style="left:8.30px;top:473.24px;font-size:12px;color:#fff;transform:scaleX(0.87);transform-origin:0 0;">-8,5</div>
<div class="t" style="left:8.30px;top:488.24px;font-size:12px;color:#fff;transform:scaleX(0.87);transform-origin:0 0;">-9</div>
<div class="t" style="left:8.30px;top:502.24px;font-size:12px;color:#fff;transform:scaleX(0.87);transform-origin:0 0;">-9,5</div>
<div class="t" style="left:23.5px;width:40px;text-align:center;top:523.84px;font-size:12px;color:#fff;transform:scaleX(0.88)">10</div>
<div class="t" style="left:109.5px;width:40px;text-align:center;top:523.84px;font-size:12px;color:#fff;transform:scaleX(0.88)">20</div>
<div class="t" style="left:237.5px;width:40px;text-align:center;top:523.84px;font-size:12px;color:#fff;transform:scaleX(0.88)">50</div>
<div class="t" style="left:334.5px;width:40px;text-align:center;top:523.84px;font-size:12px;color:#fff;transform:scaleX(0.88)">100</div>
<div class="t" style="left:432.5px;width:40px;text-align:center;top:523.84px;font-size:12px;color:#fff;transform:scaleX(0.88)">200</div>
<div class="t" style="left:560.5px;width:40px;text-align:center;top:523.84px;font-size:12px;color:#fff;transform:scaleX(0.88)">500</div>
<div class="t" style="left:647.5px;width:40px;text-align:center;top:523.84px;font-size:12px;color:#fff;transform:scaleX(0.88)">1k</div>
<div class="a" style="left:702px;top:20px;width:401px;height:257px;background:#e0dfe3;border-radius:7px 7px 0 0;overflow:hidden">
<div class="a" style="left:0;top:0;width:401px;height:29px;background:linear-gradient(to bottom,#c8c8d4 0px,#ffffff 1px,#ffffff 2px,#e8e8f0 2px,#dcdce6 8px,#e8e8f0 16px,#f6f6f9 22px,#fafafc 26px,#d8d8e0 26px,#c0c0cc 27px,#ffffff 28px)"></div>
</div>
<div class="a" style="left:702px;top:25px;width:1px;height:252px;background:#f8f8ff"></div>
<div class="a" style="left:703px;top:47px;width:1px;height:228px;background:#d0d0e8"></div>
<div class="a" style="left:704px;top:47px;width:1px;height:228px;background:#ffffff"></div>
<div class="a" style="left:1102px;top:25px;width:1px;height:252px;background:#ffffff"></div>
<div class="a" style="left:1101px;top:47px;width:1px;height:228px;background:#d0d0e8"></div>
<div class="a" style="left:1100px;top:47px;width:1px;height:228px;background:#f8f8fc"></div>
<div class="a" style="left:702px;top:273px;width:401px;height:1px;background:#d8d8e8"></div>
<div class="a" style="left:702px;top:274px;width:401px;height:3px;background:#f8f8fc"></div>
<svg class="a" style="left:710px;top:28px" width="9" height="13" viewBox="0 0 9 13" shape-rendering="crispEdges"><rect x="0" y="0" width="9" height="13" fill="#000"/><rect x="1" y="1" width="1" height="1" fill="#f0f0f0"/><rect x="2" y="1" width="1" height="1" fill="#8c8c8c"/><rect x="3" y="1" width="1" height="1" fill="#f0f0f0"/><rect x="4" y="1" width="1" height="1" fill="#8c8c8c"/><rect x="5" y="1" width="1" height="1" fill="#f0f0f0"/><rect x="1" y="2" width="1" height="1" fill="#8c8c8c"/><rect x="2" y="2" width="1" height="1" fill="#f0f0f0"/><rect x="3" y="2" width="1" height="1" fill="#8c8c8c"/><rect x="4" y="2" width="1" height="1" fill="#f0f0f0"/><rect x="5" y="2" width="1" height="1" fill="#8c8c8c"/><rect x="1" y="3" width="1" height="1" fill="#f0f0f0"/><rect x="2" y="3" width="1" height="1" fill="#8c8c8c"/><rect x="3" y="3" width="1" height="1" fill="#f0f0f0"/><rect x="4" y="3" width="1" height="1" fill="#8c8c8c"/><rect x="5" y="3" width="1" height="1" fill="#f0f0f0"/><rect x="1" y="4" width="1" height="1" fill="#8c8c8c"/><rect x="2" y="4" width="1" height="1" fill="#f0f0f0"/><rect x="3" y="4" width="1" height="1" fill="#8c8c8c"/><rect x="4" y="4" width="1" height="1" fill="#f0f0f0"/><rect x="5" y="4" width="1" height="1" fill="#8c8c8c"/><rect x="1" y="5" width="1" height="1" fill="#f0f0f0"/><rect x="2" y="5" width="1" height="1" fill="#8c8c8c"/><rect x="3" y="5" width="1" height="1" fill="#f0f0f0"/><rect x="4" y="5" width="1" height="1" fill="#8c8c8c"/><rect x="5" y="5" width="1" height="1" fill="#f0f0f0"/><rect x="1" y="6" width="1" height="1" fill="#8c8c8c"/><rect x="2" y="6" width="1" height="1" fill="#f0f0f0"/><rect x="3" y="6" width="1" height="1" fill="#8c8c8c"/><rect x="4" y="6" width="1" height="1" fill="#f0f0f0"/><rect x="5" y="6" width="1" height="1" fill="#8c8c8c"/><rect x="1" y="7" width="1" height="1" fill="#f0f0f0"/><rect x="2" y="7" width="1" height="1" fill="#8c8c8c"/><rect x="3" y="7" width="1" height="1" fill="#f0f0f0"/><rect x="4" y="7" width="1" height="1" fill="#8c8c8c"/><rect x="5" y="7" width="1" height="1" fill="#f0f0f0"/><rect x="1" y="8" width="1" height="1" fill="#8c8c8c"/><rect x="2" y="8" width="1" height="1" fill="#f0f0f0"/><rect x="3" y="8" width="1" height="1" fill="#8c8c8c"/><rect x="4" y="8" width="1" height="1" fill="#f0f0f0"/><rect x="5" y="8" width="1" height="1" fill="#8c8c8c"/><rect x="1" y="9" width="1" height="1" fill="#f0f0f0"/><rect x="2" y="9" width="1" height="1" fill="#8c8c8c"/><rect x="3" y="9" width="1" height="1" fill="#f0f0f0"/><rect x="4" y="9" width="1" height="1" fill="#8c8c8c"/><rect x="1" y="10" width="1" height="1" fill="#8c8c8c"/><rect x="2" y="10" width="1" height="1" fill="#f0f0f0"/><rect x="3" y="10" width="1" height="1" fill="#8c8c8c"/><rect x="4" y="10" width="1" height="1" fill="#f0f0f0"/><rect x="1" y="11" width="1" height="1" fill="#f0f0f0"/><rect x="2" y="11" width="1" height="1" fill="#8c8c8c"/><rect x="3" y="11" width="1" height="1" fill="#f0f0f0"/><rect x="4" y="11" width="1" height="1" fill="#8c8c8c"/><rect x="7" y="1" width="1" height="1" fill="#f0f0f0"/><rect x="7" y="2" width="1" height="6" fill="#505050"/><rect x="6" y="8" width="2" height="1" fill="#e8e8e8"/><rect x="5" y="10" width="3" height="1" fill="#e8e8e8"/></svg>
<div class="t" style="left:726.30px;top:29.15px;font-size:14px;font-weight:bold;color:#a4a4ac;transform:scaleX(0.944);transform-origin:0 0;">[1]vented : Tangband W4-657SC</div>
<div class="a" style="left:1031px;top:25px;width:21px;height:21px;border-radius:3px;border:1px solid #b0b0c4;background:linear-gradient(to bottom,#f4f4f8,#d4d4e0)"></div>
<svg class="a" style="left:1031px;top:25px" width="21" height="21"><rect x="5.5" y="12.5" width="7" height="3" fill="#8888a0" stroke="#fff" stroke-width="0.8"/></svg>
<div class="a" style="left:1054px;top:25px;width:21px;height:21px;border-radius:3px;border:1px solid #b0b0c4;background:linear-gradient(to bottom,#f4f4f8,#d4d4e0)"></div>
<svg class="a" style="left:1054px;top:25px" width="21" height="21"><rect x="5.5" y="5.5" width="10" height="10" fill="none" stroke="#8c8c9c" stroke-width="1"/><rect x="5.5" y="5.5" width="10" height="2.5" fill="#8c8c9c"/></svg>
<div class="a" style="left:1077px;top:25px;width:21px;height:21px;border-radius:3px;border:1px solid #d09898;background:linear-gradient(to bottom,#ecbcbc,#dc9494)"></div>
<svg class="a" style="left:1077px;top:25px" width="21" height="21"><path d="M5 5L16 16M16 5L5 16" stroke="#fff" stroke-width="2.3"/></svg>
<div class="a" style="left:705px;top:69px;width:395px;height:190px;border-top:1px solid #fff;border-left:1px solid #fff;border-right:1px solid #6c6c6c;border-bottom:1px solid #6c6c6c"></div>
<div class="a" style="left:707px;top:51px;width:41px;height:18px;background:#e0dfe3;border-top:1px solid #fff;border-left:1px solid #fff;border-right:none;border-radius:2px 2px 0 0"></div>
<div class="t" style="left:713.00px;top:54.84px;font-size:12px;color:#000;transform:scaleX(0.885);transform-origin:0 0;">Driver</div>
<div class="a" style="left:748px;top:49px;width:45px;height:22px;background:#e0dfe3;border-top:1px solid #fff;border-left:1px solid #fff;border-right:1px solid #6c6c6c;border-radius:2px 2px 0 0"></div>
<div class="t" style="left:755.10px;top:52.34px;font-size:12px;color:#000;transform:scaleX(0.885);transform-origin:0 0;">Box</div>
<div class="a" style="left:793px;top:51px;width:39px;height:18px;background:#e0dfe3;border-top:1px solid #fff;border-left:1px solid #fff;border-right:1px solid #6c6c6c;border-radius:2px 2px 0 0"></div>
<div class="t" style="left:796.30px;top:54.84px;font-size:12px;color:#000;transform:scaleX(0.885);transform-origin:0 0;">Vents</div>
<div class="a" style="left:832px;top:51px;width:42px;height:18px;background:#e0dfe3;border-top:1px solid #fff;border-left:1px solid #fff;border-right:1px solid #6c6c6c;border-radius:2px 2px 0 0"></div>
<div class="t" style="left:838.80px;top:54.84px;font-size:12px;color:#000;transform:scaleX(0.885);transform-origin:0 0;">Plot</div>
<div class="a" style="left:874px;top:51px;width:42px;height:18px;background:#e0dfe3;border-top:1px solid #fff;border-left:1px solid #fff;border-right:1px solid #6c6c6c;border-radius:2px 2px 0 0"></div>
<div class="t" style="left:880.80px;top:54.84px;font-size:12px;color:#000;transform:scaleX(0.885);transform-origin:0 0;">Signal</div>
<div class="a" style="left:916px;top:51px;width:54px;height:18px;background:#e0dfe3;border-top:1px solid #fff;border-left:1px solid #fff;border-right:1px solid #6c6c6c;border-radius:2px 2px 0 0"></div>
<div class="t" style="left:922.90px;top:54.84px;font-size:12px;color:#000;transform:scaleX(0.885);transform-origin:0 0;">EQ/Filter</div>
<div class="a" style="left:970px;top:51px;width:46px;height:18px;background:#e0dfe3;border-top:1px solid #fff;border-left:1px solid #fff;border-right:1px solid #6c6c6c;border-radius:2px 2px 0 0"></div>
<div class="t" style="left:977.30px;top:54.84px;font-size:12px;color:#000;transform:scaleX(0.885);transform-origin:0 0;">Project</div>
<div class="a" style="left:714px;top:77px;width:302px;height:17px;border-top:1px solid #8c8c8c;border-left:1px solid #8c8c8c;border-right:1px solid #fff;border-bottom:1px solid #fff"></div>
<div class="t" style="left:715.80px;top:79.84px;font-size:12px;color:#000;transform:scaleX(0.885);transform-origin:0 0;">vented</div>
<div class="a" style="left:1019px;top:77px;width:72px;height:17px;border-top:1px solid #707070;border-left:1px solid #707070;border-right:1px solid #505050;border-bottom:1px solid #505050;background:#e0dfe3"></div>
<div class="a" style="left:1020px;top:78px;width:70px;height:15px;border-top:1px solid #fff;border-left:1px solid #fff;border-right:1px solid #a0a0a0;border-bottom:1px solid #a0a0a0"></div>
<div class="t" style="left:1029.90px;top:79.84px;font-size:12px;color:#000;transform:scaleX(0.885);transform-origin:0 0;">Box shape</div>
<div class="a" style="left:714px;top:98px;width:106px;height:16px;border-top:1px solid #fff;border-left:1px solid #fff;border-right:1px solid #909090;border-bottom:1px solid #909090;background:#e0dfe3"></div>
<div class="t" style="left:732.80px;top:99.84px;font-size:12px;color:#000;transform:scaleX(0.885);transform-origin:0 0;">Rear chamber</div>
<div class="a" style="left:824px;top:98px;width:101px;height:16px;border-top:1px solid #fff;border-left:1px solid #fff;border-right:1px solid #909090;border-bottom:1px solid #909090;background:#e0dfe3"></div>
<div class="t" style="left:839.90px;top:99.84px;font-size:12px;color:#000;transform:scaleX(0.885);transform-origin:0 0;">Front chamber</div>
<div class="a" style="left:714px;top:118px;width:106px;height:136px;border:1px solid #909090;box-shadow:inset 1px 1px 0 #fff, 1px 1px 0 #fff"></div>
<div class="t" style="left:718.40px;top:123.84px;font-size:12px;color:#0000f0;transform:scaleX(0.885);transform-origin:0 0;">Volume:</div>
<div class="a" style="left:719px;top:138px;width:66px;height:19px;border:1px solid #a89c88;background:#fff"></div>
<div class="t" style="left:721.70px;top:140.84px;font-size:12px;color:#000;transform:scaleX(0.93);transform-origin:0 0;">3,50</div>
<div class="t" style="left:789.70px;top:145.84px;font-size:12px;color:#000;transform:scaleX(0.885);transform-origin:0 0;">l</div>
<div class="t" style="left:719.50px;top:159.84px;font-size:12px;color:#0000f0;transform:scaleX(0.885);transform-origin:0 0;">Tuning freq.</div>
<div class="a" style="left:719px;top:173px;width:66px;height:19px;border:1px solid #a89c88;background:#fff"></div>
<div class="t" style="left:721.70px;top:176.84px;font-size:12px;color:#000;transform:scaleX(0.93);transform-origin:0 0;">70</div>
<div class="t" style="left:789.70px;top:181.84px;font-size:12px;color:#000;transform:scaleX(0.885);transform-origin:0 0;">Hz</div>
<div class="t" style="left:736.90px;top:235.84px;font-size:12px;color:#000;transform:scaleX(0.9);transform-origin:0 0;">Advanced-&gt;</div>
<svg class="a" style="left:929px;top:102px" width="72" height="96" viewBox="0 0 72 96">
<rect x="1" y="1" width="69" height="93" fill="#fff" stroke="#000" stroke-width="2"/>
<rect x="50.5" y="21.5" width="7" height="31" rx="3.5" fill="#000"/>
<path d="M56 26L69.5 14.5V58L56 47Z" fill="#000"/>
<rect x="33" y="69" width="37" height="2" fill="#000"/>
<rect x="33" y="84" width="37" height="2" fill="#000"/>
<ellipse cx="64.4" cy="24.5" rx="0.8" ry="1.3" transform="rotate(35 64.4 24.5)" fill="#fff"/><ellipse cx="64.5" cy="36" rx="1" ry="0.8" fill="#fff"/><ellipse cx="64.4" cy="47.5" rx="0.8" ry="1.3" transform="rotate(-35 64.4 47.5)" fill="#fff"/>
</svg>
<div class="a" style="left:705px;top:259px;width:395px;height:1px;background:#6c6c6c"></div>
<div class="a" style="left:705px;top:260px;width:395px;height:2px;background:#ffffff"></div>
<div class="a" style="left:705px;top:272px;width:395px;height:1px;background:#8c8c8c"></div>
<div class="a" style="left:860px;top:261px;width:1px;height:11px;background:#909090"></div>
<div class="a" style="left:861px;top:262px;width:238px;height:10px;background:#ffff00"></div>
<div class="t" style="left:757.60px;top:262.96px;font-size:9.5px;font-weight:bold;font-family:'Liberation Serif',serif;color:#000;transform:scaleX(1.0);transform-origin:0 0;letter-spacing:0.25px;-webkit-text-stroke:0.35px #000;">Parameters</div>
<div class="a" style="left:702px;top:280px;width:401px;height:257px;background:#e0dfe3;border-radius:7px 7px 0 0;overflow:hidden">
<div class="a" style="left:0;top:0;width:401px;height:29px;background:linear-gradient(to bottom,#c8c8d4 0px,#ffffff 1px,#ffffff 2px,#e8e8f0 2px,#dcdce6 8px,#e8e8f0 16px,#f6f6f9 22px,#fafafc 26px,#d8d8e0 26px,#c0c0cc 27px,#ffffff 28px)"></div>
</div>
<div class="a" style="left:702px;top:285px;width:1px;height:252px;background:#f8f8ff"></div>
<div class="a" style="left:703px;top:307px;width:1px;height:228px;background:#d0d0e8"></div>
<div class="a" style="left:704px;top:307px;width:1px;height:228px;background:#ffffff"></div>
<div class="a" style="left:1102px;top:285px;width:1px;height:252px;background:#ffffff"></div>
<div class="a" style="left:1101px;top:307px;width:1px;height:228px;background:#d0d0e8"></div>
<div class="a" style="left:1100px;top:307px;width:1px;height:228px;background:#f8f8fc"></div>
<div class="a" style="left:702px;top:533px;width:401px;height:1px;background:#d8d8e8"></div>
<div class="a" style="left:702px;top:534px;width:401px;height:3px;background:#f8f8fc"></div>
<svg class="a" style="left:710px;top:288px" width="9" height="13" viewBox="0 0 9 13" shape-rendering="crispEdges"><rect x="0" y="0" width="9" height="13" fill="#000"/><rect x="1" y="1" width="1" height="1" fill="#f0f0f0"/><rect x="2" y="1" width="1" height="1" fill="#8c8c8c"/><rect x="3" y="1" width="1" height="1" fill="#f0f0f0"/><rect x="4" y="1" width="1" height="1" fill="#8c8c8c"/><rect x="5" y="1" width="1" height="1" fill="#f0f0f0"/><rect x="1" y="2" width="1" height="1" fill="#8c8c8c"/><rect x="2" y="2" width="1" height="1" fill="#f0f0f0"/><rect x="3" y="2" width="1" height="1" fill="#8c8c8c"/><rect x="4" y="2" width="1" height="1" fill="#f0f0f0"/><rect x="5" y="2" width="1" height="1" fill="#8c8c8c"/><rect x="1" y="3" width="1" height="1" fill="#f0f0f0"/><rect x="2" y="3" width="1" height="1" fill="#8c8c8c"/><rect x="3" y="3" width="1" height="1" fill="#f0f0f0"/><rect x="4" y="3" width="1" height="1" fill="#8c8c8c"/><rect x="5" y="3" width="1" height="1" fill="#f0f0f0"/><rect x="1" y="4" width="1" height="1" fill="#8c8c8c"/><rect x="2" y="4" width="1" height="1" fill="#f0f0f0"/><rect x="3" y="4" width="1" height="1" fill="#8c8c8c"/><rect x="4" y="4" width="1" height="1" fill="#f0f0f0"/><rect x="5" y="4" width="1" height="1" fill="#8c8c8c"/><rect x="1" y="5" width="1" height="1" fill="#f0f0f0"/><rect x="2" y="5" width="1" height="1" fill="#8c8c8c"/><rect x="3" y="5" width="1" height="1" fill="#f0f0f0"/><rect x="4" y="5" width="1" height="1" fill="#8c8c8c"/><rect x="5" y="5" width="1" height="1" fill="#f0f0f0"/><rect x="1" y="6" width="1" height="1" fill="#8c8c8c"/><rect x="2" y="6" width="1" height="1" fill="#f0f0f0"/><rect x="3" y="6" width="1" height="1" fill="#8c8c8c"/><rect x="4" y="6" width="1" height="1" fill="#f0f0f0"/><rect x="5" y="6" width="1" height="1" fill="#8c8c8c"/><rect x="1" y="7" width="1" height="1" fill="#f0f0f0"/><rect x="2" y="7" width="1" height="1" fill="#8c8c8c"/><rect x="3" y="7" width="1" height="1" fill="#f0f0f0"/><rect x="4" y="7" width="1" height="1" fill="#8c8c8c"/><rect x="5" y="7" width="1" height="1" fill="#f0f0f0"/><rect x="1" y="8" width="1" height="1" fill="#8c8c8c"/><rect x="2" y="8" width="1" height="1" fill="#f0f0f0"/><rect x="3" y="8" width="1" height="1" fill="#8c8c8c"/><rect x="4" y="8" width="1" height="1" fill="#f0f0f0"/><rect x="5" y="8" width="1" height="1" fill="#8c8c8c"/><rect x="1" y="9" width="1" height="1" fill="#f0f0f0"/><rect x="2" y="9" width="1" height="1" fill="#8c8c8c"/><rect x="3" y="9" width="1" height="1" fill="#f0f0f0"/><rect x="4" y="9" width="1" height="1" fill="#8c8c8c"/><rect x="1" y="10" width="1" height="1" fill="#8c8c8c"/><rect x="2" y="10" width="1" height="1" fill="#f0f0f0"/><rect x="3" y="10" width="1" height="1" fill="#8c8c8c"/><rect x="4" y="10" width="1" height="1" fill="#f0f0f0"/><rect x="1" y="11" width="1" height="1" fill="#f0f0f0"/><rect x="2" y="11" width="1" height="1" fill="#8c8c8c"/><rect x="3" y="11" width="1" height="1" fill="#f0f0f0"/><rect x="4" y="11" width="1" height="1" fill="#8c8c8c"/><rect x="7" y="1" width="1" height="1" fill="#f0f0f0"/><rect x="7" y="2" width="1" height="6" fill="#505050"/><rect x="6" y="8" width="2" height="1" fill="#e8e8e8"/><rect x="5" y="10" width="3" height="1" fill="#e8e8e8"/></svg>
<div class="t" style="left:726.30px;top:289.15px;font-size:14px;font-weight:bold;color:#a4a4ac;transform:scaleX(0.95);transform-origin:0 0;">[2]vented : TangBand W8-740E</div>
<div class="a" style="left:1031px;top:285px;width:21px;height:21px;border-radius:3px;border:1px solid #b0b0c4;background:linear-gradient(to bottom,#f4f4f8,#d4d4e0)"></div>
<svg class="a" style="left:1031px;top:285px" width="21" height="21"><rect x="5.5" y="12.5" width="7" height="3" fill="#8888a0" stroke="#fff" stroke-width="0.8"/></svg>
<div class="a" style="left:1054px;top:285px;width:21px;height:21px;border-radius:3px;border:1px solid #b0b0c4;background:linear-gradient(to bottom,#f4f4f8,#d4d4e0)"></div>
<svg class="a" style="left:1054px;top:285px" width="21" height="21"><rect x="5.5" y="5.5" width="10" height="10" fill="none" stroke="#8c8c9c" stroke-width="1"/><rect x="5.5" y="5.5" width="10" height="2.5" fill="#8c8c9c"/></svg>
<div class="a" style="left:1077px;top:285px;width:21px;height:21px;border-radius:3px;border:1px solid #d09898;background:linear-gradient(to bottom,#ecbcbc,#dc9494)"></div>
<svg class="a" style="left:1077px;top:285px" width="21" height="21"><path d="M5 5L16 16M16 5L5 16" stroke="#fff" stroke-width="2.3"/></svg>
<div class="a" style="left:705px;top:329px;width:395px;height:190px;border-top:1px solid #fff;border-left:1px solid #fff;border-right:1px solid #6c6c6c;border-bottom:1px solid #6c6c6c"></div>
<div class="a" style="left:707px;top:311px;width:41px;height:18px;background:#e0dfe3;border-top:1px solid #fff;border-left:1px solid #fff;border-right:none;border-radius:2px 2px 0 0"></div>
<div class="t" style="left:713.00px;top:314.84px;font-size:12px;color:#000;transform:scaleX(0.885);transform-origin:0 0;">Driver</div>
<div class="a" style="left:748px;top:309px;width:45px;height:22px;background:#e0dfe3;border-top:1px solid #fff;border-left:1px solid #fff;border-right:1px solid #6c6c6c;border-radius:2px 2px 0 0"></div>
<div class="t" style="left:755.10px;top:312.34px;font-size:12px;color:#000;transform:scaleX(0.885);transform-origin:0 0;">Box</div>
<div class="a" style="left:793px;top:311px;width:39px;height:18px;background:#e0dfe3;border-top:1px solid #fff;border-left:1px solid #fff;border-right:1px solid #6c6c6c;border-radius:2px 2px 0 0"></div>
<div class="t" style="left:796.30px;top:314.84px;font-size:12px;color:#000;transform:scaleX(0.885);transform-origin:0 0;">Vents</div>
<div class="a" style="left:832px;top:311px;width:42px;height:18px;background:#e0dfe3;border-top:1px solid #fff;border-left:1px solid #fff;border-right:1px solid #6c6c6c;border-radius:2px 2px 0 0"></div>
<div class="t" style="left:838.80px;top:314.84px;font-size:12px;color:#000;transform:scaleX(0.885);transform-origin:0 0;">Plot</div>
<div class="a" style="left:874px;top:311px;width:42px;height:18px;background:#e0dfe3;border-top:1px solid #fff;border-left:1px solid #fff;border-right:1px solid #6c6c6c;border-radius:2px 2px 0 0"></div>
<div class="t" style="left:880.80px;top:314.84px;font-size:12px;color:#000;transform:scaleX(0.885);transform-origin:0 0;">Signal</div>
<div class="a" style="left:916px;top:311px;width:54px;height:18px;background:#e0dfe3;border-top:1px solid #fff;border-left:1px solid #fff;border-right:1px solid #6c6c6c;border-radius:2px 2px 0 0"></div>
<div class="t" style="left:922.90px;top:314.84px;font-size:12px;color:#000;transform:scaleX(0.885);transform-origin:0 0;">EQ/Filter</div>
<div class="a" style="left:970px;top:311px;width:46px;height:18px;background:#e0dfe3;border-top:1px solid #fff;border-left:1px solid #fff;border-right:1px solid #6c6c6c;border-radius:2px 2px 0 0"></div>
<div class="t" style="left:977.30px;top:314.84px;font-size:12px;color:#000;transform:scaleX(0.885);transform-origin:0 0;">Project</div>
<div class="a" style="left:714px;top:337px;width:302px;height:17px;border-top:1px solid #8c8c8c;border-left:1px solid #8c8c8c;border-right:1px solid #fff;border-bottom:1px solid #fff"></div>
<div class="t" style="left:715.80px;top:339.84px;font-size:12px;color:#000;transform:scaleX(0.885);transform-origin:0 0;">vented</div>
<div class="a" style="left:1019px;top:337px;width:72px;height:17px;border-top:1px solid #707070;border-left:1px solid #707070;border-right:1px solid #505050;border-bottom:1px solid #505050;background:#e0dfe3"></div>
<div class="a" style="left:1020px;top:338px;width:70px;height:15px;border-top:1px solid #fff;border-left:1px solid #fff;border-right:1px solid #a0a0a0;border-bottom:1px solid #a0a0a0"></div>
<div class="t" style="left:1029.90px;top:339.84px;font-size:12px;color:#000;transform:scaleX(0.885);transform-origin:0 0;">Box shape</div>
<div class="a" style="left:714px;top:358px;width:106px;height:16px;border-top:1px solid #fff;border-left:1px solid #fff;border-right:1px solid #909090;border-bottom:1px solid #909090;background:#e0dfe3"></div>
<div class="t" style="left:732.80px;top:359.84px;font-size:12px;color:#000;transform:scaleX(0.885);transform-origin:0 0;">Rear chamber</div>
<div class="a" style="left:824px;top:358px;width:101px;height:16px;border-top:1px solid #fff;border-left:1px solid #fff;border-right:1px solid #909090;border-bottom:1px solid #909090;background:#e0dfe3"></div>
<div class="t" style="left:839.90px;top:359.84px;font-size:12px;color:#000;transform:scaleX(0.885);transform-origin:0 0;">Front chamber</div>
<div class="a" style="left:714px;top:378px;width:106px;height:136px;border:1px solid #909090;box-shadow:inset 1px 1px 0 #fff, 1px 1px 0 #fff"></div>
<div class="t" style="left:718.40px;top:383.84px;font-size:12px;color:#0000f0;transform:scaleX(0.885);transform-origin:0 0;">Volume:</div>
<div class="a" style="left:719px;top:398px;width:66px;height:19px;border:1px solid #a89c88;background:#fff"></div>
<div class="t" style="left:721.70px;top:400.84px;font-size:12px;color:#000;transform:scaleX(0.93);transform-origin:0 0;">20,00</div>
<div class="t" style="left:789.70px;top:405.84px;font-size:12px;color:#000;transform:scaleX(0.885);transform-origin:0 0;">l</div>
<div class="t" style="left:719.50px;top:419.84px;font-size:12px;color:#0000f0;transform:scaleX(0.885);transform-origin:0 0;">Tuning freq.</div>
<div class="a" style="left:719px;top:433px;width:66px;height:19px;border:1px solid #a89c88;background:#fff"></div>
<div class="t" style="left:721.70px;top:436.84px;font-size:12px;color:#000;transform:scaleX(0.93);transform-origin:0 0;">30,00</div>
<div class="t" style="left:789.70px;top:441.84px;font-size:12px;color:#000;transform:scaleX(0.885);transform-origin:0 0;">Hz</div>
<div class="t" style="left:736.90px;top:495.84px;font-size:12px;color:#000;transform:scaleX(0.9);transform-origin:0 0;">Advanced-&gt;</div>
<svg class="a" style="left:929px;top:362px" width="72" height="96" viewBox="0 0 72 96">
<rect x="1" y="1" width="69" height="93" fill="#fff" stroke="#000" stroke-width="2"/>
<rect x="50.5" y="21.5" width="7" height="31" rx="3.5" fill="#000"/>
<path d="M56 26L69.5 14.5V58L56 47Z" fill="#000"/>
<rect x="33" y="69" width="37" height="2" fill="#000"/>
<rect x="33" y="84" width="37" height="2" fill="#000"/>
<ellipse cx="64.4" cy="24.5" rx="0.8" ry="1.3" transform="rotate(35 64.4 24.5)" fill="#fff"/><ellipse cx="64.5" cy="36" rx="1" ry="0.8" fill="#fff"/><ellipse cx="64.4" cy="47.5" rx="0.8" ry="1.3" transform="rotate(-35 64.4 47.5)" fill="#fff"/>
</svg>
<div class="a" style="left:705px;top:519px;width:395px;height:1px;background:#6c6c6c"></div>
<div class="a" style="left:705px;top:520px;width:395px;height:2px;background:#ffffff"></div>
<div class="a" style="left:705px;top:532px;width:395px;height:1px;background:#8c8c8c"></div>
<div class="a" style="left:860px;top:521px;width:1px;height:11px;background:#909090"></div>
<div class="a" style="left:861px;top:522px;width:238px;height:10px;background:#0a7cc8"></div>
<div class="t" style="left:757.60px;top:522.96px;font-size:9.5px;font-weight:bold;font-family:'Liberation Serif',serif;color:#000;transform:scaleX(1.0);transform-origin:0 0;letter-spacing:0.25px;-webkit-text-stroke:0.35px #000;">Parameters</div>
</body></html>
